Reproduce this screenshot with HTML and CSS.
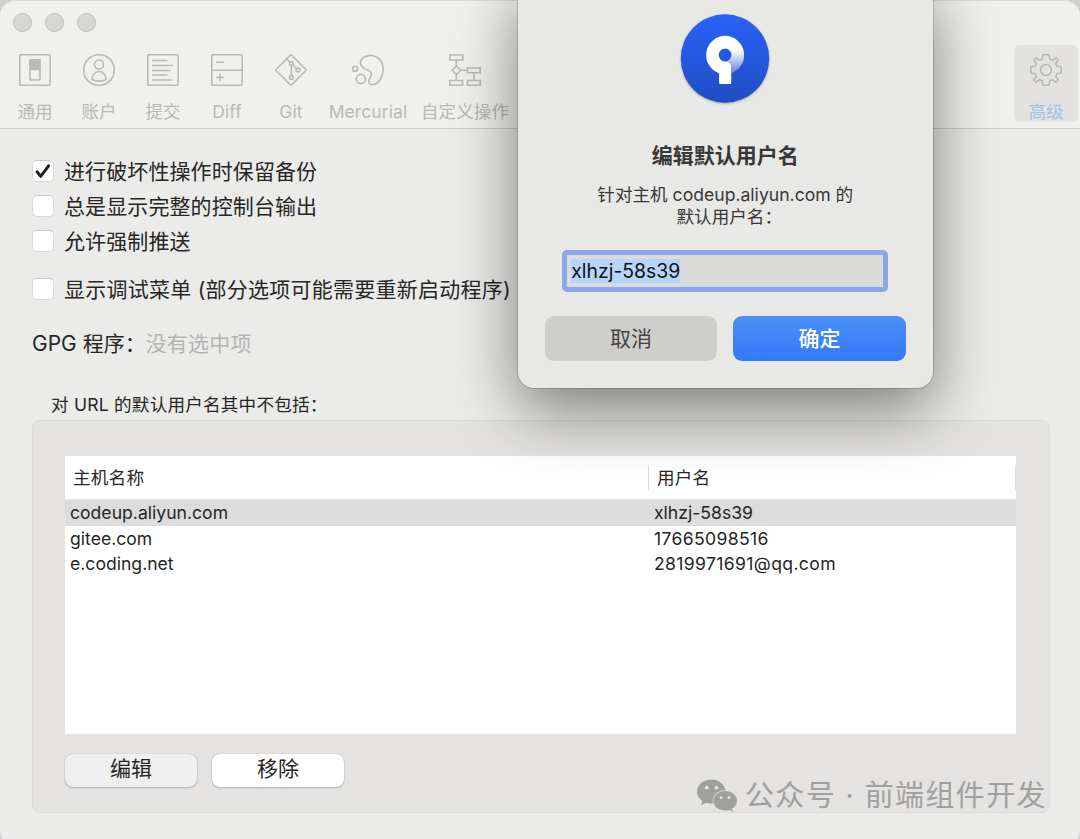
FILE: index.html
```html
<!DOCTYPE html>
<html lang="zh-CN">
<head>
    <meta charset="UTF-8">
    <meta name="viewport" content="width=device-width, initial-scale=1.0">
    <title>高级</title>
    <link rel="stylesheet" href="styles.css">
</head>
<body>
    <div class="window">
        <div class="window-header">
            <div class="traffic-lights">
                <span></span>
                <span></span>
                <span></span>
            </div>
            <div class="toolbar">
                <div class="tool">
                    <svg viewBox="0 0 32 32"><rect x=".8" y=".8" width="30.4" height="30.4" rx="1"/><rect x="11" y="6" width="10" height="20" rx="1"/><path class="solid" d="M11 6h10v9.5H11z"/></svg>
                    <span>通用</span>
                </div>
                <div class="tool">
                    <svg viewBox="0 0 32 32"><circle cx="16" cy="16" r="15.3"/><circle cx="16" cy="10.5" r="4.5"/><path d="M9 25.5c0-4.500 3-8 7-8s7 3.500 7 8c-4 2.200-10 2.200-14 0z"/></svg>
                    <span>账户</span>
                </div>
                <div class="tool">
                    <svg viewBox="0 0 32 32"><rect x=".8" y=".8" width="30.4" height="30.4" rx="1"/><path d="M5 6.500h15.500M5 11.500h21M5 16.500h18.500M5 21h15.500M5 26h20.500"/></svg>
                    <span>提交</span>
                </div>
                <div class="tool">
                    <svg viewBox="0 0 32 32"><rect x=".8" y=".8" width="30.4" height="30.4" rx="1"/><path d="M1 16.200h30M5 8.200h8M5 23.500h8M9 19.500v8"/></svg>
                    <span>Diff</span>
                </div>
                <div class="tool">
                    <svg viewBox="0 0 32 32"><path d="M15 1.600a1.500 1.500 0 0 1 2 0L30.400 15a1.500 1.500 0 0 1 0 2L17 30.400a1.500 1.500 0 0 1-2 0L1.600 17a1.500 1.500 0 0 1 0-2zM11.800 5l3.200 3.300M17.600 10.800l4 3.900M16.300 11.500v10.200"/><circle cx="16.300" cy="9.500" r="1.900"/><circle cx="23" cy="16" r="1.900"/><circle cx="16.300" cy="23.500" r="1.900"/></svg>
                    <span>Git</span>
                </div>
                <div class="tool tool-mercurial">
                    <svg viewBox="0 0 32 32"><path d="M8.800 10.300C7.300 6.300 10.800 2.200 17 1.600 25 .8 31.200 6.800 31.200 15c0 7.500-4 14-9 15.300-3.800.9-6.200-1-5.200-4 .9-2.600 3-4.600 2.300-7.200-.8-2.800-4.500-3-7-4.500-1.500-.9-2.800-2.300-3.500-4.300z"/><circle cx="3.200" cy="14.800" r="2.600"/><circle cx="8.900" cy="25" r="4.600"/></svg>
                    <span>Mercurial</span>
                </div>
                <div class="tool tool-custom">
                    <svg viewBox="0 0 32 32"><path d="M.8 1h13v5H.8zM18.500 14h12.700v4.700H18.500zM.8 26.500h12.700v4.700H.8zM18.500 26.500h12.700v4.700H18.500zM7.300 6v6M3.300 16.200l4-4.300 4.300 4.300-4.300 4.300zM11.600 16.200h6.900M7.300 20.500v6M25 18.700v7.800"/></svg>
                    <span>自定义操作</span>
                </div>
                <div class="tool tool-active">
                    <svg viewBox="0 0 32 32"><path d="M13 .8h6l.8 4.400 2.600 1.100L26 3.800 28.200 6l-2.500 3.600 1.100 2.600 4.400.8v6l-4.400.8-1.100 2.600 2.500 3.600-2.200 2.200-3.600-2.500-2.600 1.100-.8 4.400h-6l-.8-4.400-2.600-1.100L6 28.200 3.800 26l2.500-3.600-1.100-2.600L.8 19v-6l4.400-.8 1.100-2.600L3.800 6 6 3.800l3.600 2.500 2.600-1.100z"/><circle cx="16" cy="16" r="5.500"/></svg>
                    <span>高级</span>
                </div>
            </div>
        </div>

        <div class="content">
            <div class="options">
                <label class="option">
                    <span class="checkbox"><svg viewBox="0 0 22 22"><path d="M5 11.800l3.700 4.500L16.600 5.800"/></svg></span>
                    <span class="option-text">进行破坏性操作时保留备份</span>
                </label>
                <label class="option">
                    <span class="checkbox"></span>
                    <span class="option-text">总是显示完整的控制台输出</span>
                </label>
                <label class="option">
                    <span class="checkbox"></span>
                    <span class="option-text">允许强制推送</span>
                </label>
                <label class="option option-debug">
                    <span class="checkbox"></span>
                    <span class="option-text">显示调试菜单 (部分选项可能需要重新启动程序)</span>
                </label>
            </div>
            <div class="gpg">
                <span>GPG 程序：</span>
                <span class="gpg-empty">没有选中项</span>
            </div>
            <div class="group-title">对 URL 的默认用户名其中不包括：</div>
            <div class="group">
                <div class="table">
                    <div class="table-header">
                        <div class="column-title">主机名称</div>
                        <div class="column-title">用户名</div>
                    </div>
                    <div class="table-row selected">
                        <span>codeup.aliyun.com</span>
                        <span>xlhzj-58s39</span>
                    </div>
                    <div class="table-row">
                        <span>gitee.com</span>
                        <span class="digits">17665098516</span>
                    </div>
                    <div class="table-row">
                        <span>e.coding.net</span>
                        <span class="digits">2819971691@qq.com</span>
                    </div>
                </div>
                <div class="group-buttons">
                    <button class="small-button pressed">编辑</button>
                    <button class="small-button">移除</button>
                </div>
            </div>
        </div>
    </div>

    <div class="dialog">
        <svg class="app-icon" viewBox="0 0 90 90">
            <defs>
                <linearGradient id="disc" x1="0" y1="0" x2="0" y2="1">
                    <stop offset="0" stop-color="#2962fa"/>
                    <stop offset="1" stop-color="#1f4dc2"/>
                </linearGradient>
                <linearGradient id="fade" x1="0" y1="0" x2="0" y2="1">
                    <stop offset=".38" stop-color="#fff"/>
                    <stop offset="1" stop-color="#fff" stop-opacity=".25"/>
                </linearGradient>
            </defs>
            <circle cx="45" cy="45" r="44.7" fill="url(#disc)"/>
            <path fill="url(#fade)" d="M45 22a19.500 19.500 0 0 1 6.300 37.900V53c0-3.300-1.800-5-6.300-5a6.500 6.500 0 0 0 0-13z"/>
            <path fill="#fff" d="M45.300 22a19.500 19.500 0 0 0-6.300 37.900v9.600c0 .8.500 1.300 1.300 1.300H50c.8 0 1.300-.5 1.300-1.300V53c0-3.300-1.800-5-6.300-5a6.500 6.500 0 0 1 .3-13z"/>
        </svg>
        <h1 class="dialog-title">编辑默认用户名</h1>
        <p class="dialog-text">针对主机 codeup.aliyun.com 的<br><span class="dialog-text-end">默认用户名：</span></p>
        <div class="dialog-input"><span>xlhzj-58s39</span></div>
        <div class="dialog-buttons">
            <button class="cancel-button">取消</button>
            <button class="ok-button">确定</button>
        </div>
    </div>

    <div class="watermark">
        <svg viewBox="0 0 41 33">
            <path d="M15 0C6.700 0 0 5.500 0 12.500c0 4 2.200 7.400 5.600 9.700L4.300 26.500l5-2.600c1.800.5 3.700.8 5.700.8h1.400C14.500 17 21 11 29.500 11.200 28 4.800 22 0 15 0z"/>
            <path d="M41 21.800c0-5.700-5.500-10-12.200-10s-12.200 4.500-12.200 10.200S22.200 32 28.800 32c1.500 0 3-.2 4.300-.6l3.700 2-1-3.400c3.200-1.900 5.200-4.800 5.200-8.200z"/>
            <g class="eyes"><circle cx="10" cy="8.500" r="1.900"/><circle cx="20" cy="8.500" r="1.900"/><circle cx="24.700" cy="18.700" r="1.500"/><circle cx="32.700" cy="18.700" r="1.500"/></g>
        </svg>
        <span>公众号 · 前端组件开发</span>
    </div>
</body>
</html>
```

FILE: styles.css
```css
* {
    box-sizing: border-box;
}
body {
    margin: 0;
    width: 1080px;
    height: 839px;
    position: relative;
    overflow: hidden;
    font-family: Inter, 'Noto Sans CJK SC', sans-serif;
    background: #d0d0d0;
    color: #262626;
}
.window {
    height: 846px;
    background: #ebebe9;
    border-radius: 16px;
    overflow: hidden;
}
.window-header {
    height: 129px;
    padding: 13px 2px 0 3px;
    background: #f0f0ed;
    border: 1px solid #d8d8d6;
    border-width: 1px 0 1px 0;
    border-bottom-color: #cbcbc9;
    border-radius: 16px 16px 0 0;
}
.traffic-lights {
    display: flex;
    gap: 13px;
    height: 31px;
    padding: 0 0 0 10px;
    margin-top: -1px;
}
.traffic-lights span {
    width: 19px;
    height: 19px;
    border-radius: 50%;
    background: #d7d7d5;
    border: 1px solid #bdbdbb;
}
.toolbar {
    display: flex;
    margin-top: 1px;
}
.tool {
    width: 64px;
    height: 77px;
    padding-top: 9px;
    display: flex;
    flex-direction: column;
    align-items: center;
    font-size: 17.5px;
    line-height: 24px;
    letter-spacing: 0.1px;
    color: #b9b9b7;
    white-space: nowrap;
}
.tool svg {
    width: 32px;
    height: 32px;
    flex-shrink: 0;
    margin-bottom: 14px;
    fill: none;
    stroke: #b9b9b7;
    stroke-width: 1.6;
}
.tool svg .solid {
    fill: #b9b9b7;
}
.tool-mercurial {
    width: 90px;
}
.tool-custom {
    width: 104px;
}
.tool-active {
    margin-left: auto;
    background: #e3e2e0;
    border-radius: 6px;
    color: #a9bfeb;
}
.content {
    padding: 24px 30px 0 32px;
}
.option {
    display: flex;
    align-items: center;
    gap: 10px;
    height: 35.2px;
    font-size: 21px;
    letter-spacing: 0.1px;
    white-space: nowrap;
}
.option-text {
    padding-bottom: 2px;
}
.option-debug {
    margin-top: 12.5px;
    letter-spacing: 0.25px;
}
.checkbox {
    width: 22px;
    height: 22px;
    border-radius: 5px;
    background: #fff;
    border: 1px solid #dadad8;
    border-top-color: #c9c9c7;
}
.checkbox svg {
    display: block;
    width: 22px;
    height: 22px;
    margin: -1px;
    fill: none;
    stroke: #222;
    stroke-width: 3;
    stroke-linecap: round;
    stroke-linejoin: round;
}
.gpg {
    display: flex;
    margin-top: 22px;
    font-size: 21px;
    line-height: 32px;
}
.gpg-empty {
    letter-spacing: 0.2px;
    color: #b4b4b2;
}
.group-title {
    margin: 32px 0 2px 19px;
    font-size: 17.6px;
    line-height: 26px;
    letter-spacing: 0.2px;
}
.group {
    height: 393px;
    padding: 35px 33px 25px 32px;
    background: #e4e3e1;
    border: 1px solid #dcdbd9;
    border-radius: 8px;
}
.table {
    height: 278px;
    background: #fff;
    font-size: 17.6px;
}
.table-header, .table-row {
    display: grid;
    grid-template-columns: 584px 1fr;
    align-items: center;
}
.table-header {
    height: 44px;
    border-bottom: 1px solid #e6e6e6;
}
.column-title {
    height: 26px;
    padding-left: 8px;
    line-height: 26px;
    letter-spacing: 0.2px;
    border-right: 1px solid #dedede;
}
.table-row {
    height: 25.7px;
    padding-left: 5px;
}
.table-row span {
    padding-bottom: 1px;
}
.table-row .digits {
    letter-spacing: 0.35px;
}
.selected {
    background: #dcdcdc;
}
.group-buttons {
    display: flex;
    gap: 15px;
    margin-top: 20px;
}
button {
    padding: 0;
    border: none;
    font-family: inherit;
    font-size: 21px;
    color: inherit;
}
.small-button {
    width: 132px;
    height: 33px;
    padding-bottom: 3px;
    line-height: 30px;
    background: #fff;
    border-radius: 8px;
    box-shadow: 0 0 1px rgba(0, 0, 0, 0.25), 0 1px 2px rgba(0, 0, 0, 0.2);
}
.small-button.pressed {
    background: #efefef;
}
.dialog {
    position: absolute;
    left: 517.5px;
    top: -20px;
    width: 415.5px;
    height: 408px;
    padding: 34px 27px 27px;
    display: flex;
    flex-direction: column;
    align-items: center;
    background: #e8e8e6;
    border-radius: 0 0 16px 16px;
    box-shadow: 0 0 0 1px rgba(0, 0, 0, 0.15), 0 22px 64px rgba(0, 0, 0, 0.48);
}
.app-icon {
    width: 90px;
    height: 90px;
    filter: drop-shadow(0 1px 1px rgba(0, 0, 0, 0.3));
}
.dialog-title {
    margin: 38px 0 0;
    font-size: 21px;
    line-height: 30px;
    font-weight: 700;
    color: #373737;
}
.dialog-text {
    margin: 13px 0 0;
    font-size: 17.6px;
    line-height: 22px;
    text-align: center;
    color: #373737;
}
.dialog-text-end {
    padding-left: 8px;
}
.dialog-input {
    width: 326px;
    height: 42px;
    margin-top: 22px;
    padding: 4px 4px;
    background: #dbdbd9;
    border: 5px solid #8aa7ec;
    border-radius: 5px;
    font-size: 19.4px;
    line-height: 24px;
    color: #111;
}
.dialog-input span {
    display: inline-block;
    background: #b7d5fb;
}
.dialog-buttons {
    display: flex;
    gap: 16px;
    margin-top: 24px;
}
.dialog-buttons button {
    width: 172.5px;
    height: 45px;
    padding-bottom: 4px;
    border-radius: 9px;
}
.cancel-button {
    background: #cececc;
    color: #454545;
}
.ok-button {
    background: linear-gradient(#4a90f8, #3478f6);
    color: #fff;
    font-weight: 500;
}
.watermark {
    position: absolute;
    left: 697px;
    top: 777px;
    display: flex;
    align-items: center;
    gap: 8px;
    font-size: 29px;
    line-height: 38px;
    letter-spacing: 1.35px;
    color: #a0a09f;
    white-space: nowrap;
}
.watermark svg {
    width: 40px;
    height: 33px;
    margin-bottom: 2px;
    fill: #a0a09f;
    overflow: visible;
}
.watermark .eyes {
    fill: #e4e3e1;
}
```
